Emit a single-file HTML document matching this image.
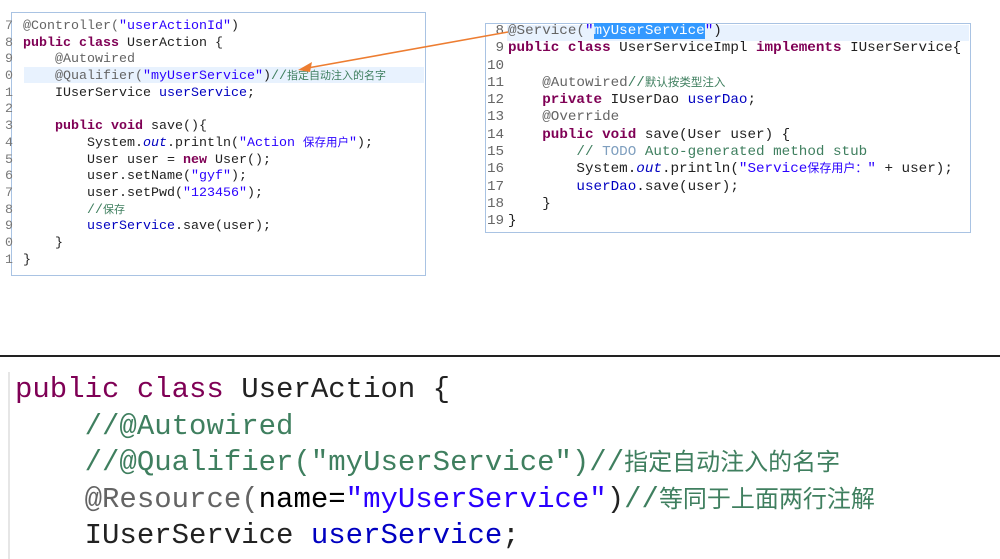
<!DOCTYPE html>
<html><head><meta charset="utf-8"><style>
body{margin:0;width:1000px;height:559px;background:#fff;position:relative;overflow:hidden;font-family:"Liberation Mono","Noto Sans CJK SC",monospace;}
.box{position:absolute;border:1.5px solid #a9c3e3;background:#fff;}
.blk{position:absolute;color:#222;}
.blk div{white-space:pre;overflow:visible}
.L div{height:16.7px;line-height:16.7px}
.R div{height:17.3px;line-height:17.3px}
.B div{height:36.5px;line-height:36.5px}
.k{color:#7f0055;font-weight:bold}
.s{color:#2a00ff}
.a{color:#646464}
.c{color:#3f7f5f}
.f{color:#0000c0}
.i{font-style:italic;color:#0000c0}
.n{color:#787878}
.cj{font-family:"Noto Sans CJK SC",sans-serif;vertical-align:baseline;line-height:0}
</style></head><body>

<div class="box" style="left:11px;top:12px;width:413px;height:262px;"></div>
<div style="position:absolute;left:24px;top:67px;width:400px;height:16px;background:#e8f2fe"></div>
<div class="blk L n" style="left:5px;top:19px;font-size:13.33px"><div>7</div><div>8</div><div>9</div><div>0</div><div>1</div><div>2</div><div>3</div><div>4</div><div>5</div><div>6</div><div>7</div><div>8</div><div>9</div><div>0</div><div>1</div></div>
<div class="blk L" style="left:23px;top:19px;font-size:13.33px">
<div><span class="a">@Controller(</span><span class="s">"userActionId"</span>)</div>
<div><span class="k">public class</span> UserAction {</div>
<div>    <span class="a">@Autowired</span></div>
<div>    <span class="a">@Qualifier(</span><span class="s">"myUserService"</span>)<span class="c">//<span class="cj" style="font-size:11px">指定自动注入的名字</span></span></div>
<div>    IUserService <span class="f">userService</span>;</div>
<div> </div>
<div>    <span class="k">public void</span> save(){</div>
<div>        System.<span class="i">out</span>.println(<span class="s">"Action <span class="cj" style="font-size:11.5px">保存用户</span>"</span>);</div>
<div>        User user = <span class="k">new</span> User();</div>
<div>        user.setName(<span class="s">"gyf"</span>);</div>
<div>        user.setPwd(<span class="s">"123456"</span>);</div>
<div>        <span class="c">//<span class="cj" style="font-size:11px">保存</span></span></div>
<div>        <span class="f">userService</span>.save(user);</div>
<div>    }</div>
<div>}</div>
</div>

<div class="box" style="left:485px;top:23px;width:484px;height:208px;"></div>
<div style="position:absolute;left:507px;top:25px;width:462px;height:16px;background:#e8f2fe"></div>
<div class="blk R n" style="left:487px;top:23px;font-size:14.25px;color:#666"><div> 8</div><div> 9</div><div>10</div><div>11</div><div>12</div><div>13</div><div>14</div><div>15</div><div>16</div><div>17</div><div>18</div><div>19</div></div>
<div class="blk R" style="left:508px;top:23px;font-size:14.25px">
<div><span class="a">@Service(</span><span class="s">"<span style="background:#3399ff;color:#fff">myUserService</span>"</span>)</div>
<div><span class="k">public class</span> UserServiceImpl <span class="k">implements</span> IUserService{</div>
<div> </div>
<div>    <span class="a">@Autowired</span><span class="c">//<span class="cj" style="font-size:11.5px">默认按类型注入</span></span></div>
<div>    <span class="k">private</span> IUserDao <span class="f">userDao</span>;</div>
<div>    <span class="a">@Override</span></div>
<div>    <span class="k">public void</span> save(User user) {</div>
<div>        <span class="c">// <span style="color:#7f9fbf">TODO</span> Auto-generated method stub</span></div>
<div>        System.<span class="i">out</span>.println(<span class="s">"Service<span class="cj" style="font-size:12px">保存用户：</span>"</span> + user);</div>
<div>        <span class="f">userDao</span>.save(user);</div>
<div>    }</div>
<div>}</div>
</div>

<svg style="position:absolute;left:0;top:0" width="1000" height="120">
<line x1="508" y1="32" x2="302" y2="69" stroke="#ed7d31" stroke-width="1.6"/>
<polygon points="298,70 312,62 310,72" fill="#ed7d31"/>
</svg>

<div style="position:absolute;left:0;top:355px;width:1000px;height:2px;background:#222"></div>
<div style="position:absolute;left:8px;top:372px;width:2px;height:187px;background:#e6e6e6"></div>
<div class="blk B" style="left:15px;top:372px;font-size:29px">
<div><span style="color:#7f0055">public class</span> UserAction {</div>
<div>    <span class="c">//@Autowired</span></div>
<div>    <span class="c">//@Qualifier("myUserService")//<span class="cj" style="font-size:24px">指定自动注入的名字</span></span></div>
<div>    <span class="a">@Resource(</span><span style="color:#000">name=</span><span class="s">"myUserService"</span>)<span class="c">//<span class="cj" style="font-size:24px">等同于上面两行注解</span></span></div>
<div>    IUserService <span class="f">userService</span>;</div>
</div>
</body></html>
